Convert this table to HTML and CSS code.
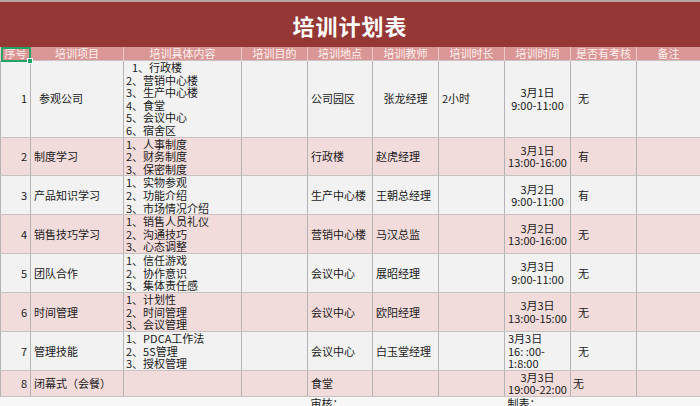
FILE: index.html
```html
<!DOCTYPE html>
<html lang="zh-CN">
<head>
<meta charset="utf-8">
<title>培训计划表</title>
<link rel="stylesheet" href="styles.css">
</head>
<body>
<div class="sheet">
  <div class="title-band"><h1 class="title">培训计划表</h1></div>
  <table class="plan">
    <colgroup>
      <col class="c-no"><col class="c-item"><col class="c-content"><col class="c-goal"><col class="c-place"><col class="c-teacher"><col class="c-dur"><col class="c-time"><col class="c-exam"><col class="c-note">
    </colgroup>
    <thead>
      <tr class="head">
        <th class="sel-cell">序号<span class="sel-box"><span class="sel-handle"></span></span></th>
        <th>培训项目</th><th>培训具体内容</th><th>培训目的</th><th>培训地点</th><th>培训教师</th><th>培训时长</th><th>培训时间</th><th>是否有考核</th><th>备注</th>
      </tr>
    </thead>
    <tbody>
      <tr class="r gray h75">
        <td class="no">1</td>
        <td class="item pad">参观公司</td>
        <td class="list"><span class="ind">1、行政楼</span><br>2、营销中心楼<br>3、生产中心楼<br>4、食堂<br>5、会议中心<br>6、宿舍区</td>
        <td></td>
        <td class="lt">公司园区</td>
        <td class="ct">张龙经理</td>
        <td class="lt">2小时</td>
        <td class="time">3月1日<br>9:00-11:00</td>
        <td class="exam">无</td>
        <td></td>
      </tr>
      <tr class="r pink h38">
        <td class="no">2</td><td class="item">制度学习</td>
        <td class="list">1、人事制度<br>2、财务制度<br>3、保密制度</td>
        <td></td><td class="lt">行政楼</td><td class="lt">赵虎经理</td><td></td>
        <td class="time">3月1日<br>13:00-16:00</td><td class="exam">有</td><td></td>
      </tr>
      <tr class="r gray h38">
        <td class="no">3</td><td class="item">产品知识学习</td>
        <td class="list">1、实物参观<br>2、功能介绍<br>3、市场情况介绍</td>
        <td></td><td class="lt">生产中心楼</td><td class="lt">王朝总经理</td><td></td>
        <td class="time">3月2日<br>9:00-11:00</td><td class="exam">有</td><td></td>
      </tr>
      <tr class="r pink h39">
        <td class="no">4</td><td class="item">销售技巧学习</td>
        <td class="list">1、销售人员礼仪<br>2、沟通技巧<br>3、心态调整</td>
        <td></td><td class="lt">营销中心楼</td><td class="lt">马汉总监</td><td></td>
        <td class="time">3月2日<br>13:00-16:00</td><td class="exam">无</td><td></td>
      </tr>
      <tr class="r gray h38">
        <td class="no">5</td><td class="item">团队合作</td>
        <td class="list">1、信任游戏<br>2、协作意识<br>3、集体责任感</td>
        <td></td><td class="lt">会议中心</td><td class="lt">展昭经理</td><td></td>
        <td class="time">3月3日<br>9:00-11:00</td><td class="exam">无</td><td></td>
      </tr>
      <tr class="r pink h39">
        <td class="no">6</td><td class="item">时间管理</td>
        <td class="list">1、计划性<br>2、时间管理<br>3、会议管理</td>
        <td></td><td class="lt">会议中心</td><td class="lt">欧阳经理</td><td></td>
        <td class="time">3月3日<br>13:00-15:00</td><td class="exam">无</td><td></td>
      </tr>
      <tr class="r gray h38">
        <td class="no">7</td><td class="item">管理技能</td>
        <td class="list">1、PDCA工作法<br>2、5S管理<br>3、授权管理</td>
        <td></td><td class="lt">会议中心</td><td class="lt">白玉堂经理</td><td></td>
        <td class="time tl">3月3日<br>16: :00-<br>1:8:00</td><td class="exam">无</td><td></td>
      </tr>
      <tr class="r pink h26">
        <td class="no">8</td><td class="item">闭幕式（会餐）</td>
        <td></td><td></td><td class="lt">食堂</td><td></td><td></td>
        <td class="time">3月3日<br>19:00-22:00</td><td class="exam ex8">无</td><td></td>
      </tr>
      <tr class="foot">
        <td></td><td></td><td></td><td></td><td class="lt">审核：</td><td></td><td></td><td class="lt">制表：</td><td></td><td></td>
      </tr>
    </tbody>
  </table>
</div>
</body>
</html>
```

FILE: styles.css
```css
html, body {
  margin: 0;
  padding: 0;
  background: #f7f7f7;
}
.sheet {
  width: 700px;
  height: 406px;
  overflow: hidden;
  font-family: "Noto Sans CJK SC", "Noto Sans", sans-serif;
  font-size: 11px;
  color: #1a1a1a;
}
.title-band {
  height: 45px;
  border-top: 2px solid #b5a5a5;
  background: #953735;
  display: flex;
  align-items: center;
  justify-content: center;
}
.title {
  margin: 0;
  color: #ffffff;
  font-size: 22px;
  font-weight: 700;
  letter-spacing: 1px;
  font-family: "Noto Sans CJK SC", sans-serif;
}
.plan {
  width: 700px;
  table-layout: fixed;
  border-collapse: collapse;
}
.c-no { width: 30px; }
.c-item { width: 93px; }
.c-content { width: 118px; }
.c-goal { width: 66px; }
.c-place { width: 65px; }
.c-teacher { width: 66px; }
.c-dur { width: 66px; }
.c-time { width: 66px; }
.c-exam { width: 66px; }
.c-note { width: 64px; }

.head th {
  height: 13px;
  padding: 0;
  background: #da9694;
  color: #fdf0f0;
  font-weight: 400;
  font-size: 11px;
  line-height: 13px;
  border-left: 1px solid #efc9c8;
  border-right: 1px solid #efc9c8;
  text-align: center;
  white-space: nowrap;
}
.sel-cell { position: relative; }
.sel-box {
  position: absolute;
  left: 0;
  top: 0;
  width: 30px;
  height: 15px;
  box-sizing: border-box;
  border: 2px solid #21a366;
}
.sel-handle {
  position: absolute;
  right: -4px;
  bottom: -4px;
  width: 4px;
  height: 4px;
  background: #21a366;
  border: 1px solid #ffffff;
}
.r td {
  padding: 0;
  border: 1px solid #b4b4b4;
  border-top-color: #c9c2c2;
  border-bottom-color: #c9c2c2;
  vertical-align: middle;
  line-height: 12.6px;
  white-space: nowrap;
  overflow: hidden;
}
.gray td { background: #f2f2f2; }
.pink td { background: #f2dcdb; }
.h75 { height: 75px; }
.h38 { height: 38px; }
.h39 { height: 39px; }
.h26 { height: 26px; }
.no { text-align: right; padding-right: 3px !important; }
.item { padding-left: 3px !important; }
.item.pad { padding-left: 8px !important; }
.list { padding-left: 2px !important; }
.ind { padding-left: 6px; }
.lt { padding-left: 3px !important; }
.ct { text-align: center; }
.time { text-align: center; }
.time.tl { text-align: left; padding-left: 3px !important; }
.exam { padding-left: 7px !important; }
.exam.ex8 { padding-left: 2px !important; }
.foot td {
  height: 12px;
  padding: 0;
  border: none;
  background: #f7f7f7;
  line-height: 12px;
  white-space: nowrap;
  vertical-align: top;
}
```
